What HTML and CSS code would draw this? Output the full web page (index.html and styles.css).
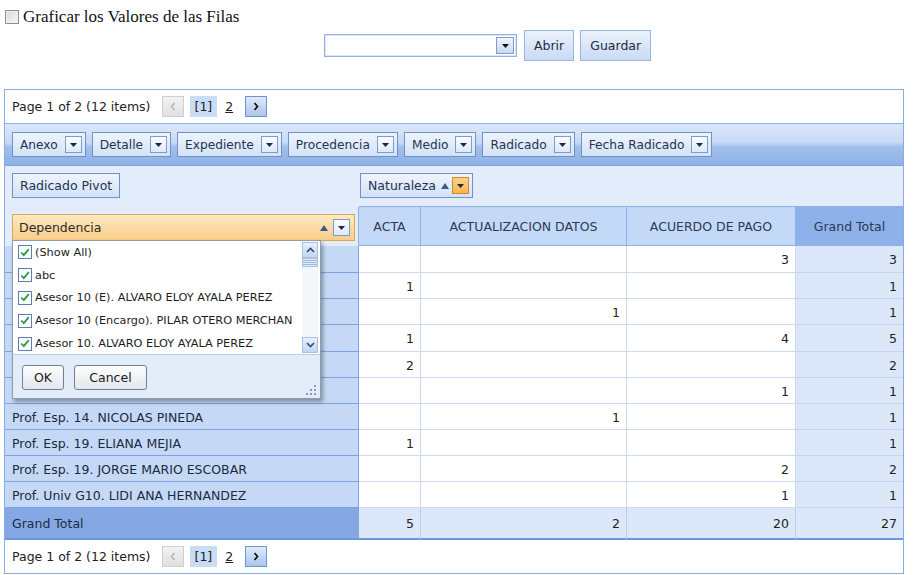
FILE: index.html
```html
<!DOCTYPE html>
<html>
<head>
<meta charset="utf-8">
<link rel="stylesheet" href="styles.css">
</head>
<body>
<div class="top">
  <label class="chk-line"><span class="cb"></span>Graficar los Valores de las Filas</label>
</div>
<div class="actions">
  <div class="combo"><span class="combo-btn"><svg width="7" height="4" viewBox="0 0 7 4"><path d="M0 0h7L3.5 4z" fill="#111"/></svg></span></div>
  <button class="btn">Abrir</button>
  <button class="btn">Guardar</button>
</div>

<div class="grid">
  <div class="pager">
    <span class="pg-text">Page 1 of 2 (12 items)</span>
    <span class="pg-prev"><svg width="6" height="9" viewBox="0 0 6 9"><path d="M4.5 1L1.5 4.5 4.5 8" stroke="#b0b0b0" stroke-width="1.3" fill="none"/></svg></span>
    <span class="pg-cur">[1]</span>
    <span class="pg-num">2</span>
    <span class="pg-next"><svg width="6" height="9" viewBox="0 0 6 9"><path d="M1.5 1L4.5 4.5 1.5 8" stroke="#111" stroke-width="1.7" fill="none"/></svg></span>
  </div>

  <div class="fields">
    <span class="fbtn">Anexo<span class="dd"><svg width="7" height="4" viewBox="0 0 7 4"><path d="M0 0h7L3.5 4z" fill="#1a2a44"/></svg></span></span>
    <span class="fbtn">Detalle<span class="dd"><svg width="7" height="4" viewBox="0 0 7 4"><path d="M0 0h7L3.5 4z" fill="#1a2a44"/></svg></span></span>
    <span class="fbtn">Expediente<span class="dd"><svg width="7" height="4" viewBox="0 0 7 4"><path d="M0 0h7L3.5 4z" fill="#1a2a44"/></svg></span></span>
    <span class="fbtn">Procedencia<span class="dd"><svg width="7" height="4" viewBox="0 0 7 4"><path d="M0 0h7L3.5 4z" fill="#1a2a44"/></svg></span></span>
    <span class="fbtn">Medio<span class="dd"><svg width="7" height="4" viewBox="0 0 7 4"><path d="M0 0h7L3.5 4z" fill="#1a2a44"/></svg></span></span>
    <span class="fbtn">Radicado<span class="dd"><svg width="7" height="4" viewBox="0 0 7 4"><path d="M0 0h7L3.5 4z" fill="#1a2a44"/></svg></span></span>
    <span class="fbtn">Fecha Radicado<span class="dd"><svg width="7" height="4" viewBox="0 0 7 4"><path d="M0 0h7L3.5 4z" fill="#1a2a44"/></svg></span></span>
  </div>

  <div class="pivot">
    <div class="area-a1"><span class="fbtn plain">Radicado Pivot</span></div>
    <div class="area-a2"><span class="fbtn nat">Naturaleza<svg class="sort" width="8" height="6" viewBox="0 0 8 6"><path d="M0 6L4 0l4 6z" fill="#3a5a8c"/></svg><span class="dd orange"><svg width="7" height="4" viewBox="0 0 7 4"><path d="M0 0h7L3.5 4z" fill="#1a2a44"/></svg></span></span></div>

    <div class="area-b1"><div class="depend"><span>Dependencia</span><svg class="sort" width="8" height="6" viewBox="0 0 8 6"><path d="M0 6L4 0l4 6z" fill="#3a5a8c"/></svg><span class="dd"><svg width="7" height="4" viewBox="0 0 7 4"><path d="M0 0h7L3.5 4z" fill="#1a2a44"/></svg></span></div></div>
    <div class="ch">ACTA</div>
    <div class="ch">ACTUALIZACION DATOS</div>
    <div class="ch">ACUERDO DE PAGO</div>
    <div class="ch gt">Grand Total</div>

    <div class="rh"></div><div class="c"></div><div class="c"></div><div class="c">3</div><div class="c t">3</div>
    <div class="rh"></div><div class="c">1</div><div class="c"></div><div class="c"></div><div class="c t">1</div>
    <div class="rh"></div><div class="c"></div><div class="c">1</div><div class="c"></div><div class="c t">1</div>
    <div class="rh"></div><div class="c">1</div><div class="c"></div><div class="c">4</div><div class="c t">5</div>
    <div class="rh"></div><div class="c">2</div><div class="c"></div><div class="c"></div><div class="c t">2</div>
    <div class="rh"></div><div class="c"></div><div class="c"></div><div class="c">1</div><div class="c t">1</div>
    <div class="rh">Prof. Esp. 14. NICOLAS PINEDA</div><div class="c"></div><div class="c">1</div><div class="c"></div><div class="c t">1</div>
    <div class="rh">Prof. Esp. 19. ELIANA MEJIA</div><div class="c">1</div><div class="c"></div><div class="c"></div><div class="c t">1</div>
    <div class="rh">Prof. Esp. 19. JORGE MARIO ESCOBAR</div><div class="c"></div><div class="c"></div><div class="c">2</div><div class="c t">2</div>
    <div class="rh">Prof. Univ G10. LIDI ANA HERNANDEZ</div><div class="c"></div><div class="c"></div><div class="c">1</div><div class="c t">1</div>

    <div class="rh grh">Grand Total</div><div class="c gr">5</div><div class="c gr">2</div><div class="c gr">20</div><div class="c gr t">27</div>

    <div class="popup">
      <div class="plist">
        <div class="pitem"><span class="ck"><svg width="10" height="9" viewBox="0 0 10 9"><path d="M1.2 4.5l2.6 2.7L8.8 1.2" stroke="#2d9b3a" stroke-width="1.8" fill="none"/></svg></span>(Show All)</div>
        <div class="pitem"><span class="ck"><svg width="10" height="9" viewBox="0 0 10 9"><path d="M1.2 4.5l2.6 2.7L8.8 1.2" stroke="#2d9b3a" stroke-width="1.8" fill="none"/></svg></span>abc</div>
        <div class="pitem"><span class="ck"><svg width="10" height="9" viewBox="0 0 10 9"><path d="M1.2 4.5l2.6 2.7L8.8 1.2" stroke="#2d9b3a" stroke-width="1.8" fill="none"/></svg></span>Asesor 10 (E). ALVARO ELOY AYALA PEREZ</div>
        <div class="pitem"><span class="ck"><svg width="10" height="9" viewBox="0 0 10 9"><path d="M1.2 4.5l2.6 2.7L8.8 1.2" stroke="#2d9b3a" stroke-width="1.8" fill="none"/></svg></span>Asesor 10 (Encargo). PILAR OTERO MERCHAN</div>
        <div class="pitem"><span class="ck"><svg width="10" height="9" viewBox="0 0 10 9"><path d="M1.2 4.5l2.6 2.7L8.8 1.2" stroke="#2d9b3a" stroke-width="1.8" fill="none"/></svg></span>Asesor 10. ALVARO ELOY AYALA PEREZ</div>
        <div class="sbar">
          <span class="sb-btn"><svg width="9" height="6" viewBox="0 0 9 6"><path d="M1 5L4.5 1.5 8 5" stroke="#2f4b78" stroke-width="1.6" fill="none"/></svg></span>
          <span class="sb-thumb"></span>
          <span class="sb-space"></span>
          <span class="sb-btn"><svg width="9" height="6" viewBox="0 0 9 6"><path d="M1 1L4.5 4.5 8 1" stroke="#2f4b78" stroke-width="1.6" fill="none"/></svg></span>
        </div>
      </div>
      <div class="pfoot">
        <button class="pbtn ok">OK</button>
        <button class="pbtn cancel">Cancel</button>
        <svg class="grip" width="10" height="10" viewBox="0 0 10 10"><g fill="#8a9bb8"><rect x="8" y="0" width="2" height="2"/><rect x="4" y="4" width="2" height="2"/><rect x="8" y="4" width="2" height="2"/><rect x="0" y="8" width="2" height="2"/><rect x="4" y="8" width="2" height="2"/><rect x="8" y="8" width="2" height="2"/></g></svg>
      </div>
    </div>
  </div>

  <div class="pager bottom">
    <span class="pg-text">Page 1 of 2 (12 items)</span>
    <span class="pg-prev"><svg width="6" height="9" viewBox="0 0 6 9"><path d="M4.5 1L1.5 4.5 4.5 8" stroke="#b0b0b0" stroke-width="1.3" fill="none"/></svg></span>
    <span class="pg-cur">[1]</span>
    <span class="pg-num">2</span>
    <span class="pg-next"><svg width="6" height="9" viewBox="0 0 6 9"><path d="M1.5 1L4.5 4.5 1.5 8" stroke="#111" stroke-width="1.7" fill="none"/></svg></span>
  </div>
</div>
</body>
</html>
```

FILE: styles.css
```css
* { box-sizing: border-box; }
body {
  margin: 0;
  background: #fff;
  font-family: "DejaVu Sans", Verdana, sans-serif;
  font-size: 12.5px;
  color: #222;
}
.top {
  height: 30px;
  padding: 7px 0 0 5px;
  font-family: "Liberation Serif", "Times New Roman", serif;
  font-size: 17px;
  color: #111;
}
.chk-line { display: flex; align-items: center; gap: 4px; line-height: 19px; }
.cb {
  width: 14px; height: 14px;
  border: 1px solid #8a9098;
  background: linear-gradient(135deg, #d8d8d8, #f8f8f8);
  box-shadow: inset 0 0 0 1px #f0f0f0;
}
.actions {
  display: flex; align-items: center; gap: 6px;
  height: 31px; padding-left: 324px;
}
.combo {
  width: 193px; height: 23px;
  border: 1px solid #93b1e1;
  box-shadow: inset 0 0 0 1px #dbe6f6;
  background: #fff;
  display: flex; justify-content: flex-end; align-items: center;
  padding-right: 2px;
  margin-right: 1px;
}
.combo-btn {
  width: 18px; height: 17px;
  border: 1px solid #7f9dcc;
  background: linear-gradient(#eef4fc, #c9daf3);
  display: flex; align-items: center; justify-content: center;
}
.btn {
  height: 31px; padding: 0 9px;
  border: 1px solid #99b5e0;
  background: linear-gradient(#ebf2fc, #c8daf4);
  font-family: "DejaVu Sans", Verdana, sans-serif;
  font-size: 12.5px; color: #1e2a3a;
}
.grid {
  margin: 28px 0 0 4px;
  width: 900px;
  border: 1px solid #86ade6;
}
.pager {
  height: 34px;
  display: flex; align-items: center;
  padding-left: 7px;
  border-bottom: 1px solid #8db2e6;
  background: #fff;
}
.pager.bottom { border-bottom: none; height: 33px; }
.pg-prev, .pg-next {
  width: 22px; height: 21px;
  display: flex; align-items: center; justify-content: center;
}
.pg-prev {
  margin-left: 11px;
  border: 1px solid #cfcfcf;
  background: linear-gradient(#f2f2f2, #e0e0e0);
}
.pg-cur {
  margin-left: 6px; height: 21px; padding: 0 5px;
  background: #c9dcf5; line-height: 21px;
}
.pg-num { margin-left: 8px; text-decoration: underline; }
.pg-next {
  margin-left: 12px;
  border: 1px solid #6f95cf;
  background: linear-gradient(#dfeafb, #a9c5ee);
}
.fields {
  height: 42px;
  display: flex; align-items: flex-start; gap: 6px;
  padding: 8px 0 0 7px;
  background: linear-gradient(#dae7f9 0%, #c7daf6 45%, #a3c0ed 55%, #8db0e6 100%);
  border-bottom: 1px solid #7fa6df;
}
.fbtn {
  height: 25px;
  display: flex; align-items: center; gap: 7px;
  padding: 0 3px 0 7px;
  border: 1px solid #6f91c6;
  background: linear-gradient(#eef4fd, #d3e2f7);
  color: #1f3354;
  white-space: nowrap;
  font-size: 12.2px;
}
.fbtn.plain { padding: 0 7px; font-size: 12.5px; }
.fbtn.nat { gap: 0; padding-right: 3px; font-size: 12.5px; }
.fbtn.nat .sort { margin: 0 3px 0 5px; }
.dd {
  width: 17px; height: 17px;
  border: 1px solid #7d9bcb;
  background: linear-gradient(#fbfdff, #dde8f7);
  display: flex; align-items: center; justify-content: center;
}
.dd.orange {
  background: linear-gradient(#ffd188, #fbb54c);
  border-color: #c98c34;
}
.pivot {
  position: relative;
  display: grid;
  grid-template-columns: 354px 62px 206px 169px 107px;
  grid-template-rows: 41px 39px 27px 26px 26px 27px 26px 26px 26px 26px 26px 26px 32px;
  background: #e3ecfa;
}
.area-a1 { padding: 7px 0 0 7px; display: flex; align-items: flex-start; }
.area-a2 {
  grid-column: 2 / 6;
  padding: 7px 0 0 1px;
  display: flex; align-items: flex-start;
  border-bottom: 1px solid #8eb1e5;
}
.area-b1 {
  padding: 7px 3px 0 7px;
  border-right: 1px solid #8eb1e5;
}
.depend {
  height: 27px;
  display: flex; align-items: center;
  padding: 0 4px 0 6px;
  border: 1px solid #dca657;
  background: linear-gradient(#fde9c4, #f9cd87);
  color: #2b2b2b;
}
.depend span:first-child { flex: 1; }
.depend .sort { margin-right: 5px; }
.ch {
  display: flex; align-items: center; justify-content: center;
  background: #c4d9f7;
  border-right: 1px solid #8eb1e5;
  border-bottom: 1px solid #8eb1e5;
  color: #2b3a55;
}
.ch.gt { background: #8db1e8; border-right: none; }
.rh {
  display: flex; align-items: center;
  padding: 1px 0 0 7px;
  background: #c5d9f6;
  border-right: 1px solid #7ea5df;
  border-bottom: 1px solid #7ea5df;
  color: #1a2a40;
  white-space: nowrap;
}
.c {
  display: flex; align-items: center; justify-content: flex-end;
  padding: 1px 6px 0 0;
  background: #fff;
  border-right: 1px solid #c9daf1;
  border-bottom: 1px solid #c9daf1;
}
.c.t { background: #dce8f9; border-right: none; border-bottom-color: #c2d5f0; }
.rh.grh {
  background: #85a8e4;
  border-bottom: 2px solid #6b98da;
  color: #1b2b44;
}
.c.gr {
  background: #dce8f9;
  border-right-color: #b9cfee;
  border-bottom: 2px solid #6b98da;
}
.c.gr.t { border-right: none; }
.popup {
  position: absolute;
  left: 7px; top: 74px;
  width: 309px; height: 159px;
  border: 1px solid #8e9db6;
  background: #e3ecf9;
  box-shadow: 2px 3px 4px rgba(0,0,0,0.35);
  font-size: 11.3px;
}
.plist {
  position: relative;
  height: 114px;
  background: #fff;
  border-bottom: 1px solid #b9cbe6;
}
.pitem {
  height: 22.8px;
  display: flex; align-items: center; gap: 3px;
  padding-left: 5px;
  white-space: nowrap;
  color: #1d1d1d;
}
.ck {
  width: 14px; height: 14px;
  border: 1px solid #5e7eaf;
  background: #fff;
  display: flex; align-items: center; justify-content: center;
}
.sbar {
  position: absolute;
  right: 2px; top: 1px; bottom: 1px;
  width: 16px;
  display: flex; flex-direction: column;
  background: #f3f6fb;
}
.sb-btn {
  height: 16px;
  display: flex; align-items: center; justify-content: center;
  border: 1px solid #a9c0e3;
  background: linear-gradient(#e8f0fb, #c2d5f1);
}
.sb-thumb {
  height: 9px;
  border: 1px solid #a9c0e3;
  background: repeating-linear-gradient(#dfe9f8 0 1px, #9fb8dd 1px 2px);
}
.sb-space { flex: 1; }
.pfoot {
  position: relative;
  height: 43px;
  padding: 10px 0 0 9px;
  display: flex; align-items: flex-start; gap: 10px;
}
.pbtn {
  height: 25px;
  border: 1px solid #6f7f96;
  border-radius: 3px;
  background: linear-gradient(#fdfdfd, #e2e7ee);
  font-family: "DejaVu Sans", Verdana, sans-serif;
  font-size: 12.5px; color: #1b1b1b;
}
.pbtn.ok { width: 42px; }
.pbtn.cancel { width: 73px; }
.grip { position: absolute; right: 4px; bottom: 3px; }
```
